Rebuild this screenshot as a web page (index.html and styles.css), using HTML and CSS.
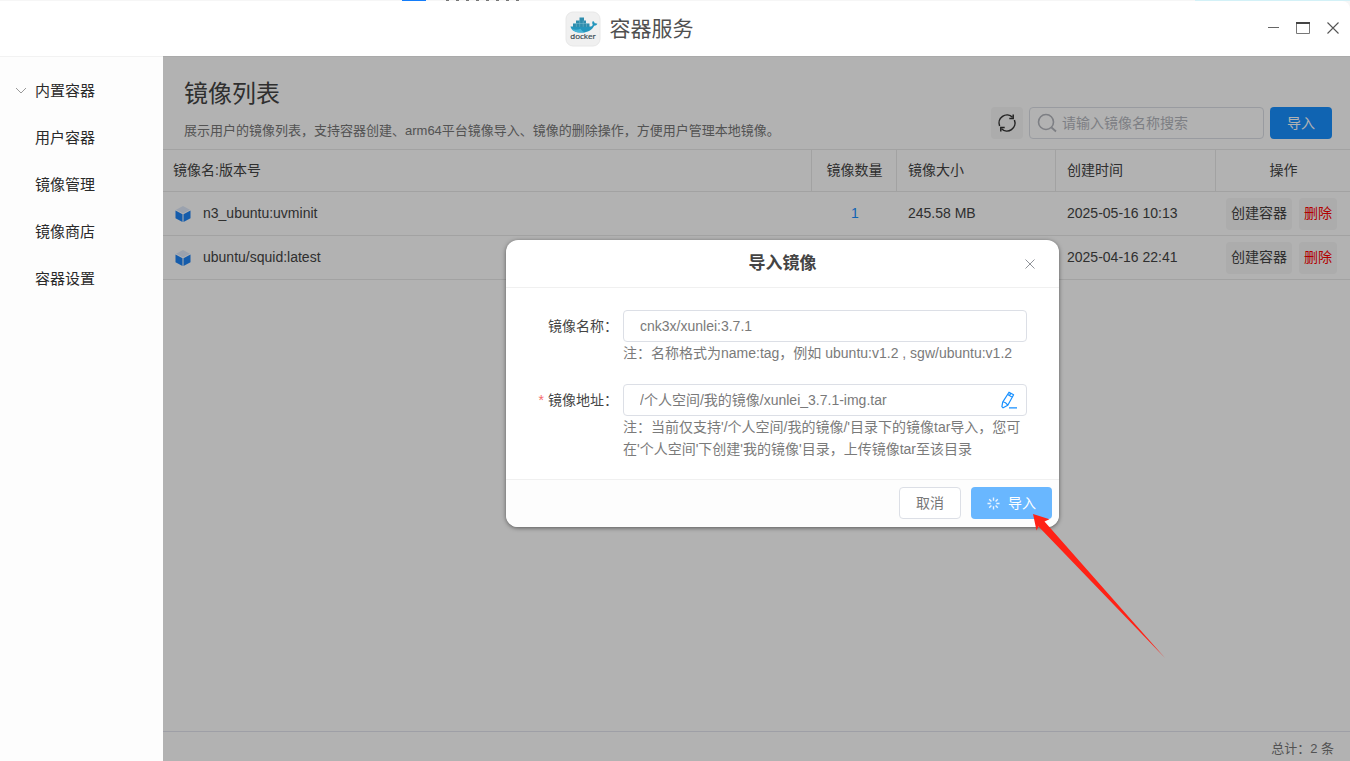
FILE: index.html
```html
<!DOCTYPE html>
<html lang="zh-CN">
<head>
<meta charset="utf-8">
<title>容器服务</title>
<link rel="stylesheet" href="styles.css">
</head>
<body>
<div class="desktop-edge">
  <span class="edge-tile"></span>
  <span class="edge-marks"></span>
  <span class="edge-sky"></span>
</div>
<header class="titlebar">
  <div class="brand">
    <svg class="brand-logo" viewBox="0 0 36 36" aria-hidden="true">
      <rect x="1" y="1" width="34" height="34" rx="7" fill="#f0f0f0" stroke="#e8e8e8"/>
      <path d="M5.500 15.500h20.500c1-.2 1.600-1 1.700-2-.8-1.200-.6-2.600.3-3.500 1 .5 1.600 1.400 1.700 2.300 1-.2 2 0 2.700.5-.5 1.300-1.700 1.900-3.200 1.900C27 19 23 21.500 17 21.500c-6.500 0-10.500-2-11.500-6z" fill="#2496bd"/>
      <path d="M8 12.500h16.500v3.500H8zM11 9.500h10v3.200H11zM14.500 6.500h4.500v3.200h-4.500z" fill="#2f8dad"/>
      <path d="M11.300 12.300v3.500M14.700 9.500v6.300M18.200 9.500v6.300M21.500 12.300v3.500M8 12.500h16" stroke="#7fbfd3" stroke-width=".5"/>
      <path d="M7 18c3 1 6 .8 8.500-.3 1 2 3 3.300 5 3.500-5 1-12 .3-13.500-3.200z" fill="#48b4d6"/>
      <text x="18" y="28" class="brand-word">docker</text>
    </svg>
    <h1 class="brand-name">容器服务</h1>
  </div>
  <div class="window-controls">
    <button type="button" aria-label="最小化"><svg viewBox="0 0 16 16"><path d="M3 7.500h11" stroke="#666"/></svg></button>
    <button type="button" aria-label="最大化"><svg viewBox="0 0 16 16"><path d="M1.500 3v10.500h13V3" fill="none" stroke="#777"/><path d="M1 3h14" stroke="#444" stroke-width="2"/></svg></button>
    <button type="button" aria-label="关闭"><svg viewBox="0 0 16 16"><path d="M2.500 2.500l11 11M13.500 2.500l-11 11" stroke="#555" stroke-width="1.100"/></svg></button>
  </div>
</header>
<div class="workspace">
  <nav class="sidebar">
    <a href="#" class="nav-item"><svg class="chevron" viewBox="0 0 12 12" aria-hidden="true"><path d="M1 3l5 5 5-5" fill="none" stroke="#999"/></svg>内置容器</a>
    <a href="#" class="nav-item">用户容器</a>
    <a href="#" class="nav-item">镜像管理</a>
    <a href="#" class="nav-item">镜像商店</a>
    <a href="#" class="nav-item">容器设置</a>
  </nav>
  <main class="content">
    <section class="page-head">
      <div class="page-text">
        <h2>镜像列表</h2>
        <p>展示用户的镜像列表，支持容器创建、arm64平台镜像导入、镜像的删除操作，方便用户管理本地镜像。</p>
      </div>
      <div class="tools">
        <button type="button" class="icon-button" aria-label="刷新">
          <svg viewBox="0 0 20 20"><path d="M2.600 13A8 8 0 0 1 15.500 4.200M17.400 7A8 8 0 0 1 4.500 15.800" fill="none" stroke="#333" stroke-width="1.500"/><path d="M16.200 1.500v3.900h-3.900M3.800 18.500v-3.900h3.900" fill="none" stroke="#333" stroke-width="1.500"/></svg>
        </button>
        <label class="search">
          <svg viewBox="0 0 20 20" aria-hidden="true"><circle cx="9" cy="9" r="7.500" fill="none" stroke="#b4b6bd" stroke-width="1.600"/><path d="M14.500 14.500l4.500 4" stroke="#b4b6bd" stroke-width="1.800"/></svg>
          <input type="text" placeholder="请输入镜像名称搜索" aria-label="搜索镜像">
        </label>
        <button type="button" class="btn btn-primary">导入</button>
      </div>
    </section>
    <table class="images">
      <colgroup><col><col class="col-count"><col class="col-size"><col class="col-time"><col class="col-actions"></colgroup>
      <thead>
        <tr><th>镜像名:版本号</th><th class="center">镜像数量</th><th>镜像大小</th><th>创建时间</th><th class="center">操作</th></tr>
      </thead>
      <tbody>
        <tr>
          <td><div class="image-name"><svg viewBox="0 0 16 18" aria-hidden="true"><path d="M8 1l7 3.700-7 3.800-7-3.800z" fill="#dfe9fa"/><path d="M.5 5.600l7 3.700V17l-7-3.800zM15.500 5.600l-7 3.700V17l7-3.800z" fill="#1f84f5"/></svg>n3_ubuntu:uvminit</div></td>
          <td class="center"><a href="#">1</a></td>
          <td>245.58 MB</td>
          <td>2025-05-16 10:13</td>
          <td><div class="actions"><button type="button" class="chip">创建容器</button><button type="button" class="chip danger">删除</button></div></td>
        </tr>
        <tr>
          <td><div class="image-name"><svg viewBox="0 0 16 18" aria-hidden="true"><path d="M8 1l7 3.700-7 3.800-7-3.800z" fill="#dfe9fa"/><path d="M.5 5.600l7 3.700V17l-7-3.800zM15.500 5.600l-7 3.700V17l7-3.800z" fill="#1f84f5"/></svg>ubuntu/squid:latest</div></td>
          <td class="center"></td>
          <td></td>
          <td>2025-04-16 22:41</td>
          <td><div class="actions"><button type="button" class="chip">创建容器</button><button type="button" class="chip danger">删除</button></div></td>
        </tr>
      </tbody>
    </table>
    <footer class="summary">总计：2 条</footer>
    <div class="mask"></div>
    <form class="dialog" role="dialog" aria-labelledby="dialog-title">
      <div class="dialog-head">
        <h3 id="dialog-title">导入镜像</h3>
        <button type="button" class="dialog-close" aria-label="关闭"><svg viewBox="0 0 12 12"><path d="M1.500 1.500l9 9M10.500 1.500l-9 9" stroke="#909399"/></svg></button>
      </div>
      <div class="dialog-body">
        <div class="field">
          <label for="image-name">镜像名称：</label>
          <div class="control">
            <div class="box"><input id="image-name" type="text" value="cnk3x/xunlei:3.7.1"></div>
            <p class="note">注：名称格式为name:tag，例如 ubuntu:v1.2 , sgw/ubuntu:v1.2</p>
          </div>
        </div>
        <div class="field">
          <label for="image-path"><span class="required">*</span>镜像地址：</label>
          <div class="control">
            <div class="box">
              <input id="image-path" type="text" value="/个人空间/我的镜像/xunlei_3.7.1-img.tar">
              <button type="button" class="edit" aria-label="选择文件"><svg viewBox="0 0 18 18"><path d="M9 1.200l4.600 2.600-5.800 10.400-4.700 2.600-1.200-1.200.8-4.500zM7.700 3.600l4.600 2.600M10.800 2.300l-1.200 2.200M2.700 11.100c1.600-.4 4.200 1.100 4.700 3M9 16.800h8" fill="none" stroke="#1890ff" stroke-width="1.200" stroke-linejoin="round"/></svg></button>
            </div>
            <p class="note">注：当前仅支持'/个人空间/我的镜像/'目录下的镜像tar导入，您可在'个人空间'下创建'我的镜像'目录，上传镜像tar至该目录</p>
          </div>
        </div>
      </div>
      <div class="dialog-foot">
        <button type="button" class="btn btn-plain">取消</button>
        <button type="submit" class="btn btn-loading"><svg viewBox="0 0 14 14" aria-hidden="true"><path d="M7 .5v3.500M7 10v3.500M.5 7H4M10 7h3.500M2.400 2.400l2.400 2.400M9.200 9.200l2.400 2.400M2.400 11.600l2.400-2.400M9.200 4.800l2.400-2.400" stroke="#e8f4ff" stroke-width="1.500"/></svg>导入</button>
      </div>
      <svg class="arrow" viewBox="0 0 134 146" aria-hidden="true"><path d="M1 1l16.500 5.300-5 2.200L133 145 6.500 13.500 4.500 17.500z" fill="#ff2216"/></svg>
    </form>
  </main>
</div>
</body>
</html>
```
FILE: styles.css
```css
* { box-sizing: border-box; }

body {
  margin: 0;
  height: 100vh;
  display: flex;
  flex-direction: column;
  overflow: hidden;
  background: #f6f6f6;
  color: #444;
  font: 14px/21px "Liberation Sans", "Noto Sans CJK SC", sans-serif;
}

h1, h2, h3, p { margin: 0; font-weight: normal; }
button, input { font: inherit; color: inherit; }
button { padding: 0; border: 0; background: none; cursor: pointer; }
a { color: inherit; text-decoration: none; }
svg { display: block; flex: none; }

.desktop-edge { height: 1px; display: flex; }
.edge-tile { width: 24px; margin-left: 402px; background: #147dfa; }
.edge-marks {
  width: 76px;
  margin-left: 20px;
  background: repeating-linear-gradient(90deg, #777 0 3px, #f6f6f6 3px 10px);
}
.edge-sky { width: 155px; margin-left: auto; background: #d3f1f7; }

.titlebar {
  flex: none;
  height: 55px;
  display: flex;
  align-items: center;
  padding-right: 2px;
  border-radius: 0 8px 0 0;
  background: #fff;
}
.brand { flex: 1; display: flex; align-items: center; justify-content: center; gap: 9px; }
.brand-logo { width: 36px; height: 36px; }
.brand-word { font: 8px "Open Sans", sans-serif; fill: #33474f; stroke: #33474f; stroke-width: .2px; text-anchor: middle; }
.brand-name { font-size: 21px; line-height: 32px; color: #505050; }
.window-controls { align-self: flex-start; display: flex; padding-top: 12px; }
.window-controls button { width: 30px; height: 30px; display: grid; place-items: center; }
.window-controls svg { width: 16px; height: 16px; }

.workspace { flex: 1; min-height: 0; display: flex; }

.sidebar {
  flex: none;
  width: 163px;
  padding-top: 10px;
  border-top: 1px solid #f2f2f2;
  background: #fdfdfd;
}
.nav-item {
  height: 47px;
  display: flex;
  align-items: center;
  position: relative;
  padding-left: 35px;
  font-size: 15px;
  color: #2a2a2a;
}
.chevron { position: absolute; left: 15px; width: 12px; height: 12px; }

.content {
  flex: 1;
  min-width: 0;
  position: relative;
  display: flex;
  flex-direction: column;
  border-top: 1px solid #aaa;
  background: #fff;
}
.mask { position: absolute; inset: 0; background: rgba(0, 0, 0, .3); }

.page-head {
  display: flex;
  justify-content: space-between;
  align-items: flex-end;
  padding: 19px 18px 8px 21px;
}
.page-text h2 { font-size: 24px; line-height: 36px; }
.page-text p { margin-top: 8px; font-size: 13px; line-height: 21px; color: #777; }
.tools { display: flex; gap: 6px; padding-bottom: 2px; }
.icon-button { width: 32px; height: 32px; display: grid; place-items: center; border-radius: 4px; background: #f6f6f6; }
.icon-button svg { width: 20px; height: 20px; }
.search {
  width: 235px;
  height: 32px;
  display: flex;
  align-items: center;
  gap: 5px;
  padding-left: 7px;
  border: 1px solid #dcdfe6;
  border-radius: 4px;
}
.search svg { width: 20px; height: 20px; }
.search input { flex: 1; min-width: 0; padding: 0; border: 0; outline: 0; background: none; }
.search input::placeholder { color: #b4b6bd; }

.btn { height: 32px; min-width: 62px; display: flex; align-items: center; justify-content: center; border-radius: 4px; }
.btn-primary { background: #1890ff; color: #fff; }
.btn-plain { border: 1px solid #dcdfe6; background: #fff; color: #777; }
.btn-loading { gap: 8px; padding: 0 16px; background: #69b7ff; color: #fff; }
.btn-loading svg { width: 13px; height: 13px; }

.images { width: 100%; table-layout: fixed; border-collapse: separate; border-spacing: 0; border-top: 1px solid #e8e8e8; }
.col-count { width: 85px; }
.col-size { width: 159px; }
.col-time { width: 160px; }
.col-actions { width: 134px; }
.images th, .images td { padding: 0 10px 0 11px; border-bottom: 1px solid #e8e8e8; text-align: left; font-weight: normal; }
.images th:first-child, .images td:first-child, .images td:last-child { padding-left: 10px; }
.images th { height: 42px; border-right: 1px solid #e8e8e8; }
.images th:last-child { border-right: 0; }
.images td { height: 44px; }
.images .center { text-align: center; }
.images td a { color: #1890ff; }
.image-name { display: flex; align-items: center; gap: 12px; padding-left: 2px; }
.image-name svg { width: 16px; height: 18px; }
.actions { display: flex; gap: 7px; }
.chip { flex: none; height: 32px; padding: 0 5px; border-radius: 4px; background: #f6f6f6; }
.danger { color: #f00; }

.summary {
  margin-top: auto;
  padding: 6px 16px 2px;
  border-top: 1px solid #e2e4ee;
  text-align: right;
  font-size: 13px;
  color: #777;
}

.dialog {
  position: absolute;
  top: 183px;
  left: 343px;
  width: 553px;
  border-radius: 12px;
  background: #fff;
  box-shadow: 0 1px 4px rgba(0, 0, 0, .5);
}
.dialog-head {
  height: 48px;
  position: relative;
  display: flex;
  align-items: center;
  justify-content: center;
  border-bottom: 1px solid #f0f0f0;
}
.dialog-head h3 { font-size: 17px; line-height: 24px; font-weight: bold; }
.dialog-close { position: absolute; right: 23px; }
.dialog-close svg { width: 12px; height: 12px; }
.dialog-body { display: grid; gap: 20px; padding: 22px 32px 19px 0; }
.field { display: flex; gap: 5px; }
.field label { width: 112px; line-height: 32px; text-align: right; }
.required { margin-right: 4px; color: #f56c6c; }
.control { flex: 1; min-width: 0; }
.box { height: 32px; display: flex; align-items: center; padding: 0 8px 0 16px; border: 1px solid #dcdfe6; border-radius: 4px; color: #7a7a7a; }
.box input { flex: 1; min-width: 0; padding: 0; border: 0; outline: 0; background: none; }
.edit svg { width: 18px; height: 18px; }
.note { line-height: 22px; color: #7a7a7a; }
.dialog-foot {
  display: flex;
  justify-content: flex-end;
  gap: 10px;
  padding: 7px 7px 8px;
  border-top: 1px solid #f0f0f0;
  border-radius: 0 0 12px 12px;
  background: #fdfdfd;
}
.arrow { position: absolute; top: 273px; left: 526px; width: 134px; height: 146px; pointer-events: none; }
```
